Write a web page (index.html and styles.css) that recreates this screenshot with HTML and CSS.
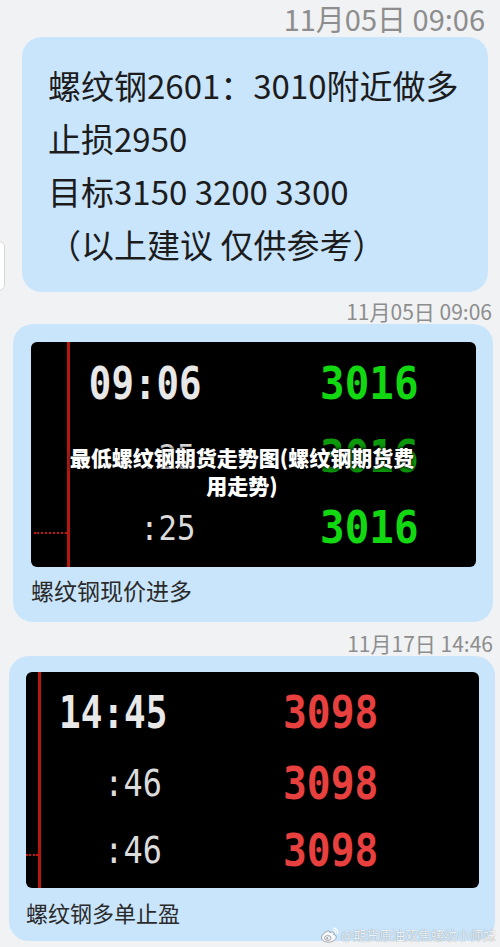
FILE: index.html
```html
<!DOCTYPE html>
<html lang="zh-CN">
<head>
    <meta charset="utf-8">
    <meta name="viewport" content="width=device-width, initial-scale=1">
    <link rel="stylesheet" href="styles.css">
</head>

<body>
    <div class="chat">
        <div class="stamp stamp-lg">11月05日 09:06</div>
        <div class="bubble note">
            <p>螺纹钢2601：3010附近做多</p>
            <p>止损2950</p>
            <p>目标3150 3200 3300</p>
            <p>（以上建议 仅供参考）</p>
        </div>

        <div class="stamp stamp-2">11月05日 09:06</div>
        <div class="bubble shot shot-2">
            <div class="screen green">
                <span class="redline"></span>
                <span class="dots"></span>
                <span class="t big r1">09:06</span><span class="p r1">3016</span>
                <span class="t r2">:25</span><span class="p dim r2">3016</span>
                <span class="t r3">:25</span><span class="p r3">3016</span>
            </div>
            <p class="caption">螺纹钢现价进多</p>
            <h1 class="headline">最低螺纹钢期货走势图(螺纹钢期货费用走势)</h1>
        </div>

        <div class="stamp stamp-3">11月17日 14:46</div>
        <div class="bubble shot shot-3">
            <div class="screen red">
                <span class="redline"></span>
                <span class="dots"></span>
                <span class="t big r1">14:45</span><span class="p r1">3098</span>
                <span class="t r2">:46</span><span class="p r2">3098</span>
                <span class="t r3">:46</span><span class="p r3">3098</span>
            </div>
            <p class="caption">螺纹钢多单止盈</p>
        </div>
    </div>

    <div class="edge-tab"></div>

    <div class="watermark">
        <svg width="19" height="16" viewBox="0 0 19 16">
            <path d="M7.5 4.2C4.2 5.6 1.2 8.4 1.6 11.2c.4 2.6 4 4.2 7.6 3.9 4-.3 7.2-2.6 7-5.2-.1-1.6-1.6-2.2-2.6-2.4.6-1.4.4-2.6-1.2-2.6-1 0-2 .5-2.6.8.3-1-.2-2-2.3-1.5z" fill="rgba(255,255,255,.85)" stroke="rgba(90,90,90,.55)" stroke-width=".9"/>
            <ellipse cx="7.8" cy="11" rx="3.3" ry="2.4" fill="none" stroke="rgba(90,90,90,.6)" stroke-width=".9"/>
            <circle cx="7.3" cy="11.2" r="1" fill="rgba(90,90,90,.6)"/>
            <path d="M13.4 1.2a4.6 4.6 0 0 1 4.4 5.2M13.3 3.3a2.4 2.4 0 0 1 2.4 2.8" fill="none" stroke="rgba(255,255,255,.9)" stroke-width="1.3" stroke-linecap="round"/>
        </svg>
        <span>@期货原油双焦螺纹小师妹</span>
    </div>
</body>
</html>
```

FILE: styles.css
```css
body {
    margin: 0;
    background-color: #f0f2f4;
    font-family: "Noto Sans CJK SC", "Noto Sans", sans-serif;
    color: #1c1c1c;
}

.chat {
    padding-bottom: 5px;
}

p, h1 {
    margin: 0;
}

/* time stamps */
.stamp {
    text-align: right;
    color: #8d8d8d;
    font-size: 21px;
    line-height: 26px;
}

.stamp-lg {
    font-size: 29px;
    line-height: 37px;
    padding-right: 15px;
}

.stamp-2 {
    padding: 6px 8px 0 0;
    height: 26px;
}

.stamp-3 {
    padding: 8px 7px 0 0;
    height: 26px;
}

/* bubbles */
.bubble {
    background-color: #c9e5fc;
    border-radius: 20px;
}

.note {
    margin: 0 12px 0 22px;
    padding: 22px 10px 21px 26px;
    font-size: 33px;
    line-height: 53px;
}

.shot-2 {
    position: relative;
    margin: 0 7px 0 13px;
    padding: 18px 17px 16px 18px;
}

.shot-3 {
    margin: 0 5px 0 9px;
    padding: 16px 16px 13px 17px;
}

.caption {
    font-size: 23px;
    line-height: 32px;
    margin-top: 7px;
    color: #2a2a2a;
}

.shot-3 .caption {
    font-size: 22px;
    margin-top: 8px;
}

/* black price screens */
.screen {
    display: grid;
    background-color: #000;
    border-radius: 6px;
    overflow: hidden;
    font-family: "DejaVu Sans Mono", "Liberation Mono", monospace;
    line-height: 1;
}

.green {
    height: 225px;
    grid-template-columns: 36px 3px 131px 119px 1fr;
    grid-template-rows: 84px 62px 79px;
}

.red {
    height: 216px;
    grid-template-columns: 12px 3px 126px 116px 1fr;
    grid-template-rows: 81px 60px 75px;
}

.redline {
    grid-column: 2;
    grid-row: 1 / 4;
    background-color: #b5170e;
}

.dots {
    grid-column: 1;
    grid-row: 3;
    align-self: start;
    margin: 44px 0 0 3px;
    border-top: 2px dotted #c8160c;
}

.red .dots {
    margin: 41px 0 0 0;
}

.t {
    grid-column: 3;
    justify-self: end;
    align-self: center;
    color: #dcdcdc;
    font-size: 34px;
    margin-right: 6px;
    transform-origin: right center;
    transform: scaleX(.9);
}

.t.big {
    font-weight: bold;
    color: #e8e8e8;
    font-size: 44px;
    margin-right: 0;
    transform: scaleX(.85);
}

.red .t {
    font-size: 37px;
    margin-right: 5px;
    transform: scaleX(.86);
}

.red .t.big {
    font-size: 45px;
    margin-right: 0;
    transform: scaleX(.8);
}

.p {
    grid-column: 5;
    justify-self: start;
    align-self: center;
    font-weight: bold;
    font-size: 44px;
    transform-origin: left center;
    transform: scaleX(.93);
}

.green .p {
    color: #12d812;
}

.green .p.dim {
    color: #0c9a0c;
}

.red .p {
    color: #e8403e;
    font-size: 45px;
    transform: scaleX(.88);
}

.r1 {grid-row: 1;}
.r2 {grid-row: 2;}
.r3 {grid-row: 3;}

/* title printed over the page */
.headline {
    position: absolute;
    top: 119px;
    left: 54px;
    width: 350px;
    text-align: center;
    color: #fff;
    font-size: 21px;
    font-weight: 900;
    line-height: 28px;
    text-shadow: 0 0 4px rgba(0, 0, 0, .9), 0 0 2px #000;
}

.edge-tab {
    position: absolute;
    top: 241px;
    left: -10px;
    width: 13px;
    height: 48px;
    background-color: #fff;
    border: 1px solid #d8d8d8;
    border-radius: 6px;
}

.watermark {
    position: absolute;
    top: 926px;
    right: 4px;
    display: flex;
    align-items: center;
    gap: 2px;
    font-size: 13px;
    line-height: 18px;
    color: rgba(255, 255, 255, .88);
    text-shadow: 0 0 1px rgba(0, 0, 0, .45);
}
```
